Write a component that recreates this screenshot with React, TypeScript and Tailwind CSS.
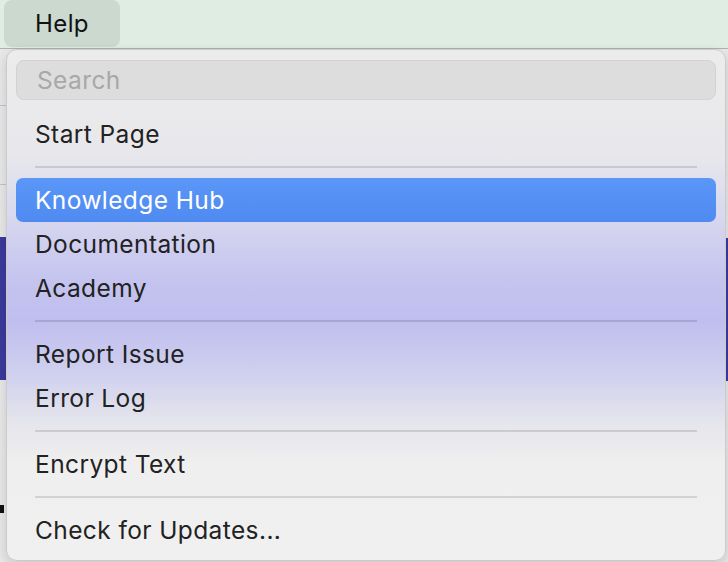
import React from 'react'

type Entry = { label: string; active?: boolean } | 'sep'

const entries: Entry[] = [
  { label: 'Start Page' },
  'sep',
  { label: 'Knowledge Hub', active: true },
  { label: 'Documentation' },
  { label: 'Academy' },
  'sep',
  { label: 'Report Issue' },
  { label: 'Error Log' },
  'sep',
  { label: 'Encrypt Text' },
  'sep',
  { label: 'Check for Updates...' },
]

export default function App() {
  return (
    <div
      className="relative flex h-[562px] w-[728px] flex-col overflow-hidden bg-[#e8e8e8] text-[#222]"
      style={{ fontFamily: 'Inter, "Noto Sans", sans-serif' }}
    >
      {/* menu bar */}
      <div className="flex h-[49px] shrink-0 items-start border-b border-[#a9b4ac] bg-[#e0ede3] pl-[4px]">
        <div className="flex h-[47px] w-[116px] items-center rounded-[8px] bg-[#cbd9cf] pl-[31px] text-[24px] tracking-[0.4px] text-[#111]">
          Help
        </div>
      </div>

      {/* app content peeking behind the menu */}
      <div className="flex flex-1 justify-between">
        <div className="flex w-[6px] flex-col">
          <div className="h-[57px] border-b border-[#c4c4c4]" />
          <div className="h-[79px] border-b border-[#c4c4c4]" />
          <div className="h-[52px]" />
          <div className="h-[143px] bg-[#3b3a9c]" />
          <div className="h-[125px]" />
          <div className="h-[8px] w-[4px] bg-[#111]" />
        </div>
        <div className="flex w-[3px] flex-col">
          <div className="h-[189px]" />
          <div className="h-[143px] bg-[#3b3a9c]" />
        </div>
      </div>

      {/* dropdown */}
      <div className="absolute left-[6px] top-[49px] h-[512px] w-[720px] overflow-hidden rounded-[11px] border border-[#cbcbcb] bg-[linear-gradient(to_bottom,#ececec_0%,#e8e8ec_20%,#d7d7ef_33%,#c5c4ef_45%,#bfbeee_53%,#cfcfef_63%,#e5e5ec_73%,#efefef_81%,#f0f0f0_100%)] shadow-[0_4px_12px_rgba(0,0,0,0.15)]">
        <div className="px-[9px] pt-[10px]">
          <div className="flex h-[40px] items-center rounded-[8px] border border-[#d2d2d2] bg-[#dddddd] pl-[20px] text-[24.5px] tracking-[0.4px] text-[#a8a8a8]">
            Search
          </div>
        </div>
        <div className="mt-[12px] flex flex-col px-[9px]">
          {entries.map((e, i) =>
            e === 'sep' ? (
              <div key={i} className="flex h-[22px] items-center px-[19px]">
                <div className="h-[2px] w-full bg-black/[0.12]" />
              </div>
            ) : (
              <div
                key={i}
                className={`flex h-[44px] items-center rounded-[7px] pl-[19px] text-[24.5px] tracking-[0.4px] ${
                  e.active ? 'bg-[linear-gradient(to_bottom,#5a97f7,#4f8af1)] text-white' : ''
                }`}
              >
                {e.label}
              </div>
            )
          )}
        </div>
      </div>
    </div>
  )
}
